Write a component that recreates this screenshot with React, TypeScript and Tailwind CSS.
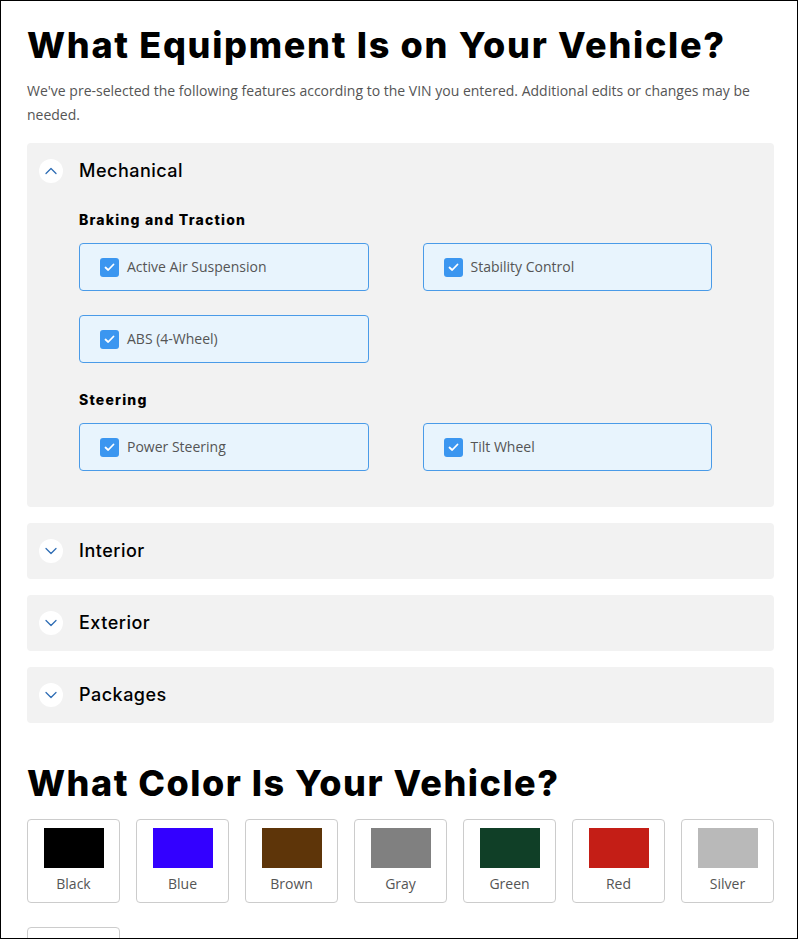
import { ChevronDown, ChevronUp } from "lucide-react";

const heading = "font-['Inter',sans-serif] font-extrabold text-black";
const body = "font-['Open_Sans',sans-serif]";

const sections = [
  {
    title: "Braking and Traction",
    items: ["Active Air Suspension", "Stability Control", "ABS (4-Wheel)"],
  },
  { title: "Steering", items: ["Power Steering", "Tilt Wheel"] },
];

const colors = [
  { name: "Black", hex: "bg-[#000000]" },
  { name: "Blue", hex: "bg-[#3300ff]" },
  { name: "Brown", hex: "bg-[#5e3509]" },
  { name: "Gray", hex: "bg-[#808080]" },
  { name: "Green", hex: "bg-[#103f27]" },
  { name: "Red", hex: "bg-[#c41e16]" },
  { name: "Silver", hex: "bg-[#b9b9b9]" },
  { name: "White", hex: "bg-[#ffffff]" },
];

const Toggle = ({ open }: { open: boolean }) => (
  <span className="flex h-6 w-6 items-center justify-center rounded-full bg-white text-[#2f6db5]">
    {open ? <ChevronUp size={20} strokeWidth={1.5} /> : <ChevronDown size={20} strokeWidth={1.5} />}
  </span>
);

const CheckCard = ({ label }: { label: string }) => (
  <label className="flex h-12 items-center gap-2 rounded border border-[#4a9be8] bg-[#e8f4fd] pl-5">
    <span className="flex h-[19px] w-[19px] items-center justify-center rounded-[3px] bg-[#3b96f0]">
      <svg width="11" height="9" viewBox="0 0 11 9" fill="none">
        <path d="M1.5 4.5 L4.2 7 L9.5 1.5" stroke="white" strokeWidth="1.8" strokeLinecap="round" strokeLinejoin="round" />
      </svg>
    </span>
    <span className={`${body} text-sm text-[#555]`}>{label}</span>
  </label>
);

const App = () => {
  return (
    <div className="h-[939px] overflow-hidden border border-black bg-white pl-[26px] pr-[23px] pt-[22px]">
      {/* equipment */}
      <h1 className={`${heading} text-[36px] leading-[44px] tracking-[1.7px]`}>What Equipment Is on Your Vehicle?</h1>
      <p className={`${body} mt-[12px] text-sm leading-6 text-[#555]`}>
        We've pre-selected the following features according to the VIN you entered. Additional edits or changes may be
        needed.
      </p>

      <div className="mt-4 flex flex-col gap-4">
        <div className="rounded bg-[#f2f2f2] pb-9">
          <div className="flex h-14 items-center gap-4 pl-3">
            <Toggle open />
            <span className="font-['Inter',sans-serif] text-lg font-medium tracking-[0.5px] text-black">Mechanical</span>
          </div>
          <div className="pl-[52px] pr-[62px]">
            {sections.map((s, i) => (
              <div key={s.title} className={i > 0 ? "mt-[27px]" : "mt-[11px]"}>
                <h3 className="font-['Inter',sans-serif] text-sm font-extrabold leading-5 tracking-[1.2px] text-black">
                  {s.title}
                </h3>
                <div className="mt-[13px] grid grid-cols-2 gap-x-[54px] gap-y-6">
                  {s.items.map((it) => (
                    <CheckCard key={it} label={it} />
                  ))}
                </div>
              </div>
            ))}
          </div>
        </div>

        {["Interior", "Exterior", "Packages"].map((t) => (
          <div key={t} className="flex h-14 items-center gap-4 rounded bg-[#f2f2f2] pl-3">
            <Toggle open={false} />
            <span className="font-['Inter',sans-serif] text-lg font-medium tracking-[0.5px] text-black">{t}</span>
          </div>
        ))}
      </div>

      {/* color */}
      <h2 className={`${heading} mt-[38px] text-[36px] leading-[44px] tracking-[1.5px]`}>What Color Is Your Vehicle?</h2>
      <div className="mt-[14px] flex flex-wrap gap-x-4 gap-y-6">
        {colors.map((c) => (
          <div
            key={c.name}
            className="flex h-[84px] w-[93px] flex-col items-center rounded border border-[#ccc] bg-white pt-2"
          >
            <span className={`h-10 w-[60px] ${c.hex}`} />
            <span className={`${body} mt-[6px] text-sm text-[#555]`}>{c.name}</span>
          </div>
        ))}
      </div>
    </div>
  );
};

export default App;
